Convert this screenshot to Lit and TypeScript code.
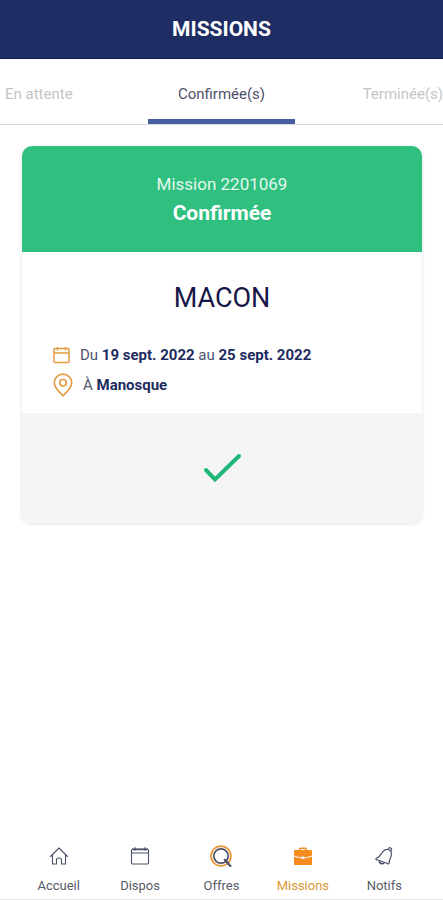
import { LitElement, html, css, svg } from "lit";
import { customElement, property, state } from "lit/decorators.js";
import { classMap } from "lit/directives/class-map.js";

const icons: Record<string, unknown> = {
  home: svg`<path d="M1.500 10.500 L10 2 L18.500 10.500 M3.500 9 V18 H7.500 V14 Q7.500 12 10 12 Q12.500 12 12.500 14 V18 H16.500 V9" />`,
  calendar: svg`<rect x="1.500" y="3" width="17" height="15" rx="1" /><path d="M2 7 H18 M5 1.500 V4 M15 1.500 V4" /><path d="M3 3.500 H17" stroke-width="1.6" />`,
  search: svg`<circle cx="10" cy="10" r="9" stroke="#e9973a" stroke-width="1.6" /><circle cx="10" cy="10" r="6.500" stroke-width="1.5" /><path d="M13.500 13.500 L18.500 19" stroke-width="2" />`,
  briefcase: svg`<g fill="#f58a1f" stroke="none"><path d="M6 4 V3 Q6 1.500 7.500 1.500 H12.500 Q14 1.500 14 3 V4 H18 Q19 4 19 5 V9.500 Q15 11.300 11.500 11.400 V10.500 H8.500 V11.400 Q5 11.300 1 9.500 V5 Q1 4 2 4 Z M7.500 4 H12.500 V3 H7.500 Z" fill-rule="evenodd" /><path d="M1 10.500 Q5 12.200 8.500 12.300 V13 H11.500 V12.300 Q15 12.200 19 10.500 V18 Q19 19 18 19 H2 Q1 19 1 18 Z" /></g>`,
  bell: svg`<path d="M2 12.500 Q6 10.500 7.500 7.500 Q10.500 2.800 14.500 3.500 Q18.500 5.500 17 10.500 Q15 14.500 15 17.500 Q14.500 18.500 13.500 17.500 L3 13.800 Q1.500 13.500 2 12.500 Z" stroke-width="1.2" /><path d="M14.500 3.500 L15.300 1.500 L17.700 2.500 L17 5" /><path d="M5.500 15 Q5.500 17.800 8 17.800 Q9.500 17.800 10 16.800" stroke-width="1.600" />`,
};

@customElement("nav-item")
class NavItem extends LitElement {
  @property() label = "";
  @property() icon = "";
  @property({ type: Boolean }) active = false;

  static styles = css`
    :host { display: block; }
    .link {
      display: flex;
      flex-direction: column;
      align-items: center;
      gap: 12px;
      color: #555b69;
      text-decoration: none;
      font-size: 13px;
      line-height: 16px;
    }
    .link.active { color: #dc9834; }
    .icon {
      width: 20px;
      height: 20px;
      fill: none;
      stroke: #4a5068;
      stroke-width: 1.1;
      stroke-linecap: round;
      stroke-linejoin: round;
    }
    .icon.search { width: 22px; height: 22px; margin: -1px; }
  `;

  render() {
    return html`<a class=${classMap({ link: true, active: this.active })} href="#${this.icon}">
      <svg class=${classMap({ icon: true, search: this.icon === "search" })} viewBox="0 0 20 20" aria-hidden="true">${icons[this.icon]}</svg>
      <span>${this.label}</span>
    </a>`;
  }
}

@customElement("mission-card")
class MissionCard extends LitElement {
  static styles = css`
    :host { display: block; }
    .card {
      border-radius: 10px;
      overflow: hidden;
      background: #fff;
      box-shadow: 0 1px 4px rgba(0, 0, 0, 0.12);
      color: #1e2b60;
    }
    .status {
      background: #2fc080;
      color: #fff;
      text-align: center;
      padding: 24px 16px;
    }
    .number { margin: 0; font-size: 17px; line-height: 28px; color: #e2f8ed; }
    .state { margin: 0; font-size: 21px; line-height: 30px; font-weight: 700; }
    .body { padding: 28px 31px 13px; }
    .client {
      margin: 0 0 24px;
      text-align: center;
      font-size: 27px;
      line-height: 36px;
      font-weight: 400;
      color: #17174a;
    }
    .row {
      display: flex;
      align-items: center;
      gap: 10px;
      margin: 0;
      font-size: 15px;
      line-height: 30px;
      color: #4c5570;
    }
    .row b { color: #1e2b60; }
    .icon { fill: none; stroke: #e39a42; stroke-width: 1.5; stroke-linejoin: round; }
    .date { width: 17px; height: 18px; }
    .pin { width: 20px; height: 24px; }
    .footer {
      display: flex;
      justify-content: center;
      background: #f5f5f5;
      padding: 40px 16px;
    }
    .check {
      width: 40px;
      height: 30px;
      fill: none;
      stroke: #20b878;
      stroke-width: 4;
      stroke-linecap: round;
    }
  `;

  render() {
    return html`<article class="card">
      <header class="status">
        <p class="number">Mission 2201069</p>
        <p class="state">Confirmée</p>
      </header>
      <div class="body">
        <h2 class="client">MACON</h2>
        <p class="row">
          <svg class="icon date" viewBox="0 0 17 18" aria-hidden="true">
            <rect x="1" y="2.500" width="15" height="14" rx="1" /><path d="M1 7 H16 M4.500 1 V4.500 M12.500 1 V4.500" />
          </svg>
          <span>Du <b>19 sept. 2022</b> au <b>25 sept. 2022</b></span>
        </p>
        <p class="row">
          <svg class="icon pin" viewBox="0 0 18 22" aria-hidden="true">
            <path d="M9 21 Q1 13.500 1 9 A8 8 0 0 1 17 9 Q17 13.500 9 21 Z" /><circle cx="9" cy="9" r="3" />
          </svg>
          <span>À <b>Manosque</b></span>
        </p>
      </div>
      <footer class="footer">
        <svg class="check" viewBox="0 0 40 30" role="img" aria-label="Confirmée"><path d="M4 17 L13 26.500 L37 3" /></svg>
      </footer>
    </article>`;
  }
}

@customElement("app-root")
class AppRoot extends LitElement {
  @state() tab = 1;

  static styles = css`
    :host {
      display: flex;
      flex-direction: column;
      min-height: 100vh;
      background: #fff;
      font-family: Roboto, "Liberation Sans", sans-serif;
    }
    .top {
      background: #1e2d64;
      border-bottom: 1px solid #101b50;
      color: #fff;
      text-align: center;
    }
    .title { margin: 0; font-size: 21px; line-height: 58px; font-weight: 700; }
    .tabs {
      display: grid;
      grid-template-columns: repeat(3, 1fr);
      border-bottom: 1px solid #d9d9db;
    }
    .tab {
      border: 0;
      border-bottom: 5px solid transparent;
      background: none;
      padding: 11px 0 1px;
      font-family: inherit;
      font-size: 15px;
      line-height: 48px;
      color: #c5c5c8;
      text-align: center;
    }
    .tab:first-child { text-align: left; padding-left: 5px; }
    .tab:last-child { text-align: right; }
    .tab.selected { color: #4d5168; border-bottom-color: #465da0; }
    .content { flex: 1; padding: 21px 21px 21px 22px; }
    .nav {
      display: grid;
      grid-template-columns: repeat(5, 1fr);
      padding: 8px 18px 5px;
      border-bottom: 1px solid #e4e4e4;
    }
  `;

  render() {
    return html`
      <header class="top"><h1 class="title">MISSIONS</h1></header>
      <div class="tabs" role="tablist">
        ${["En attente", "Confirmée(s)", "Terminée(s)"].map(
          (label, i) => html`<button
            class=${classMap({ tab: true, selected: this.tab === i })}
            role="tab"
            aria-selected=${this.tab === i}
            @click=${() => (this.tab = i)}
          >${label}</button>`
        )}
      </div>
      <main class="content"><mission-card></mission-card></main>
      <nav class="nav">
        <nav-item label="Accueil" icon="home"></nav-item>
        <nav-item label="Dispos" icon="calendar"></nav-item>
        <nav-item label="Offres" icon="search"></nav-item>
        <nav-item label="Missions" icon="briefcase" active></nav-item>
        <nav-item label="Notifs" icon="bell"></nav-item>
      </nav>
    `;
  }
}
